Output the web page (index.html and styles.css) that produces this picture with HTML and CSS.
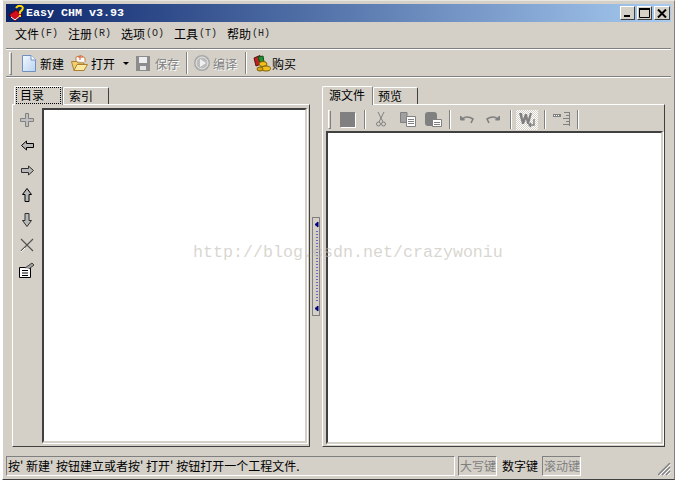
FILE: index.html
```html
<!DOCTYPE html>
<html lang="zh-CN">
<head>
    <meta charset="UTF-8">
    <meta name="viewport" content="width=device-width, initial-scale=1.0">
    <title>Easy CHM v3.93</title>
    <link rel="stylesheet" href="styles.css">
</head>
<body>
    <div class="window">
        <div class="titlebar">
            <svg class="app-icon" width="16" height="17" viewBox="0 0 16 17">
                <path d="M0 10 L7 5 L13 10 L6 16 Z" fill="#d01020" stroke="#600000"/>
                <path d="M2 12 L6 15 L12 10" fill="none" stroke="#fff"/>
                <path d="M7 3 Q9 0 12 1 Q15 2 13 5 L11 7 L11 9" fill="none" stroke="#ffd800" stroke-width="2"/>
                <rect x="10" y="10" width="2" height="2" fill="#ffd800"/>
            </svg>
            <span class="title-text">Easy CHM v3.93</span>
            <div class="caption-btns">
                <div class="caption-btn caption-min"><svg width="8" height="8"><rect x="0" y="6" width="6" height="2" fill="#000"/></svg></div>
                <div class="caption-btn caption-max"><svg width="11" height="10"><path d="M0.5 1.5 H10.5 V9.5 H0.5 Z" fill="none" stroke="#000"/><rect x="0" y="0" width="11" height="2" fill="#000"/></svg></div>
                <div class="caption-btn caption-close"><svg width="10" height="9"><path d="M1 0.5 L9 8.5 M9 0.5 L1 8.5" stroke="#000" stroke-width="2"/></svg></div>
            </div>
        </div>

        <div class="menubar">
            <span class="menu-item">文件<span class="key">(F)</span></span>
            <span class="menu-item">注册<span class="key">(R)</span></span>
            <span class="menu-item">选项<span class="key">(O)</span></span>
            <span class="menu-item">工具<span class="key">(T)</span></span>
            <span class="menu-item">帮助<span class="key">(H)</span></span>
        </div>

        <div class="toolbar">
            <div class="grip"></div>
            <div class="tool tool-new">
                <svg width="14" height="17" viewBox="0 0 14 17">
                    <defs><linearGradient id="pageFill" x1="0" y1="0" x2="1" y2="1"><stop offset="0" stop-color="#f4f8fe"/><stop offset="1" stop-color="#b8d4f0"/></linearGradient></defs>
                    <path d="M0.5 0.5 H9 L13.5 5 V16.5 H0.5 Z" fill="url(#pageFill)" stroke="#7090c0"/>
                    <path d="M9 0.5 V5 H13.5" fill="#fff" stroke="#7090c0"/>
                </svg>
                <span>新建</span>
            </div>
            <div class="tool tool-open">
                <svg width="17" height="17" viewBox="0 0 17 17">
                    <path d="M5 6 V2 L10 0.5 L14 3 V7" fill="#fff" stroke="#c08040"/>
                    <path d="M7 2 L12 2 M9 1 L9 5" stroke="#e05030"/>
                    <path d="M0.5 6.5 H6 L7 8 H13 V15.5 H3 Z" fill="#f0d070" stroke="#b08030"/>
                    <path d="M3 15.5 L6 9.5 H16.5 L13 15.5 Z" fill="#fbe9a0" stroke="#b08030"/>
                </svg>
                <span>打开</span>
            </div>
            <svg class="drop-arrow" width="6" height="3"><path d="M0 0 H6 L3 3 Z" fill="#000"/></svg>
            <div class="tool tool-save off">
                <svg width="14" height="15" viewBox="0 0 14 15">
                    <path d="M0 0 H14 V15 H0 Z" fill="#8c8c8c"/>
                    <rect x="3" y="1" width="8" height="6" fill="#eee"/>
                    <rect x="4" y="10" width="6" height="4" fill="#e4e4e4"/>
                </svg>
                <span>保存</span>
            </div>
            <div class="sep sep-a"></div>
            <div class="tool tool-build off">
                <svg width="16" height="16" viewBox="0 0 16 16">
                    <circle cx="8" cy="8" r="8" fill="#a8a8a8"/>
                    <circle cx="8" cy="8" r="6" fill="#bcbcbc" stroke="#e8e8e8"/>
                    <path d="M6 4 L12 8 L6 12 Z" fill="#f0f0f0"/>
                </svg>
                <span>编译</span>
            </div>
            <div class="sep sep-b"></div>
            <div class="tool tool-buy">
                <svg width="18" height="17" viewBox="0 0 18 17">
                    <path d="M1 3 L7 0.5 L8 9 L3 11 Z" fill="#c02020" stroke="#601010"/>
                    <path d="M5 2 L10 1 L11 7 L7 8 Z" fill="#209030" stroke="#105018"/>
                    <ellipse cx="10" cy="9" rx="4" ry="2.5" fill="#f0c020" stroke="#806000"/>
                    <ellipse cx="13" cy="13.5" rx="4.5" ry="2.5" fill="#f0c020" stroke="#806000"/>
                    <ellipse cx="7" cy="14" rx="3" ry="2" fill="#d8a818" stroke="#806000"/>
                </svg>
                <span>购买</span>
            </div>
        </div>

        <div class="main">
            <div class="pane pane-left">
                <div class="tabs">
                    <div class="tab tab-on tab-index"><span class="focus">目录</span></div>
                    <div class="tab tab-search">索引</div>
                </div>
                <div class="panel panel-left">
                    <div class="sidebar">
                        <svg width="16" height="16" viewBox="0 0 16 16"><path d="M6.5 1.5 H9.5 V6.5 H14.5 V9.5 H9.5 V14.5 H6.5 V9.5 H1.5 V6.5 H6.5 Z" fill="#c0c0c0" stroke="#808080"/></svg>
                        <svg width="16" height="16" viewBox="0 0 16 16"><path d="M2.5 8.5 L7.5 4 V6.5 H14.5 V10.5 H7.5 V13 Z" fill="#b8b8b8" stroke="#000"/></svg>
                        <svg width="16" height="16" viewBox="0 0 16 16"><path d="M14.5 8.5 L9.5 4 V6.5 H2.5 V10.5 H9.5 V13 Z" fill="#b8b8b8" stroke="#303030"/></svg>
                        <svg width="16" height="16" viewBox="0 0 16 16"><path d="M8 1.5 L12.5 7.5 H10 V14.5 H6 V7.5 H3.5 Z" fill="#b8b8b8" stroke="#000"/></svg>
                        <svg width="16" height="16" viewBox="0 0 16 16"><path d="M8 14.5 L12.5 8.5 H10 V1.5 H6 V8.5 H3.5 Z" fill="#b8b8b8" stroke="#303030"/></svg>
                        <svg width="16" height="16" viewBox="0 0 16 16"><path d="M2 2 L14 14 M14 2 L2 14" stroke="#505050" stroke-width="1.1"/><path d="M2 15 L6 11" stroke="#fff"/></svg>
                        <svg width="16" height="16" viewBox="0 0 16 16"><path d="M0.5 5.5 H11.5 V15.5 H0.5 Z" fill="#fff" stroke="#000"/><path d="M3 8.5 H9 M3 11 H9 M3 13.5 H9" stroke="#000"/><path d="M6 6 L13 1 L15 3 L10 7" fill="#a0a0a0" stroke="#404040"/></svg>
                    </div>
                    <div class="sunken list"></div>
                </div>
            </div>

            <div class="splitter">
                <div class="split-grip">
                    <svg width="6" height="91" viewBox="0 0 6 91">
                        <path d="M4 1 V6 L1 3.5 Z" fill="#000080" stroke="#000080"/>
                        <path d="M3 10 V80" stroke="#0000a0" stroke-dasharray="1 2"/>
                        <path d="M4 85 V90 L1 87.5 Z" fill="#000080" stroke="#000080"/>
                    </svg>
                </div>
            </div>

            <div class="pane pane-right">
                <div class="tabs">
                    <div class="tab tab-on tab-source">源文件</div>
                    <div class="tab tab-preview">预览</div>
                </div>
                <div class="panel panel-right">
                    <div class="edit-tools">
                        <div class="grip grip-small"></div>
                        <div class="stop-icon"></div>
                        <div class="sep sep-small"></div>
                        <svg class="ed-cut" width="10" height="15" viewBox="0 0 10 15"><path d="M2 0 L7 10 M8 0 L3 10" stroke="#808080"/><circle cx="2.5" cy="12" r="2" fill="none" stroke="#808080"/><circle cx="7.5" cy="12" r="2" fill="none" stroke="#808080"/></svg>
                        <svg class="ed-copy" width="16" height="15" viewBox="0 0 16 15"><path d="M0.5 0.5 H7 V10.5 H0.5 Z" fill="#a0a0a0" stroke="#808080"/><path d="M6.5 4.5 H15.5 V14.5 H6.5 Z" fill="#fff" stroke="#808080"/><path d="M8 7.5 H14 M8 9.5 H14 M8 11.5 H14" stroke="#808080"/></svg>
                        <svg class="ed-paste" width="17" height="15" viewBox="0 0 17 15"><rect x="0" y="0" width="12" height="14" rx="3" fill="#808080"/><path d="M7.5 7.5 H16.5 V14.5 H7.5 Z" fill="#fff" stroke="#808080"/><path d="M9 10.5 H15 M9 12.5 H15" stroke="#808080"/></svg>
                        <div class="sep sep-small sep-edit"></div>
                        <svg class="ed-undo" width="14" height="9" viewBox="0 0 14 9"><path d="M0.5 1 V5 H4.5 Z" fill="#808080" stroke="#808080"/><path d="M2 4 Q7 0 13 4 L11 8" fill="none" stroke="#808080" stroke-width="1.6"/></svg>
                        <svg class="ed-redo" width="14" height="9" viewBox="0 0 14 9"><path d="M13.5 1 V5 H9.5 Z" fill="#808080" stroke="#808080"/><path d="M12 4 Q7 0 1 4 L3 8" fill="none" stroke="#808080" stroke-width="1.6"/></svg>
                        <div class="sep sep-small sep-undo"></div>
                        <div class="wrap-btn">
                            <svg width="19" height="18" viewBox="0 0 19 18"><path d="M1 2 H4 L5 8 L7 3 H9 L10 8 L12 2 H14 L11 13 H9 L8 8 L6 13 H4 Z" fill="#808080"/><path d="M16 8 V14 H11 M13 12 L11 14 L13 16" fill="none" stroke="#808080" stroke-width="1.4"/></svg>
                        </div>
                        <div class="sep sep-small sep-wrap"></div>
                        <svg class="ed-ruler" width="17" height="15" viewBox="0 0 17 15"><rect x="0" y="2" width="8" height="3" fill="#808080"/><path d="M1 3.5 H7" stroke="#fff" stroke-dasharray="1 1"/><path d="M11 0.5 H17 M13 3.5 H17 M10 6.5 H17 M13 9.5 H17 M10 12.5 H17" stroke="#808080"/><path d="M16.5 0 V14" stroke="#808080"/></svg>
                        <div class="sep sep-small sep-ruler"></div>
                    </div>
                    <div class="sunken editor"></div>
                </div>
            </div>
        </div>

        <div class="statusbar">
            <div class="status status-msg">按' 新建' 按钮建立或者按' 打开' 按钮打开一个工程文件.</div>
            <div class="status status-key key-off">大写键</div>
            <div class="status-plain">数字键</div>
            <div class="status status-key key-off">滚动键</div>
            <svg class="resize" width="13" height="13" viewBox="0 0 13 13">
                <path d="M0 12 L12 0 M4 12 L12 4 M8 12 L12 8" stroke="#808080" stroke-width="1.4"/>
                <path d="M1.5 12.5 L12.5 1.5 M5.5 12.5 L12.5 5.5 M9.5 12.5 L12.5 9.5" stroke="#fff"/>
            </svg>
        </div>

        <div class="watermark">http://blog.csdn.net/crazywoniu</div>
    </div>
</body>
</html>
```

FILE: styles.css
```css
* {
    box-sizing: border-box;
}
body {
    margin: 0;
    background: #fff;
    font-family: "Noto Sans CJK SC", "Liberation Sans", sans-serif;
    font-size: 12px;
    color: #000;
    overflow: hidden;
}
svg {
    display: block;
    flex: none;
}

/* window frame */
.window {
    position: relative;
    width: 673px;
    height: 480px;
    margin-left: 2px;
    padding: 3px;
    background: #d4d0c8;
    border: 1px solid #d4d0c8;
    border-top-color: #e8e6e0;
    border-left-color: #fff;
    border-right-color: #808080;
    border-bottom-color: #404040;
}
.titlebar {
    display: flex;
    align-items: center;
    height: 18px;
    padding: 0 1px 0 3px;
    background: linear-gradient(to right, #0a246a, #a6caf0);
}
.title-text {
    margin-left: 1px;
    font-family: "Liberation Mono", monospace;
    font-size: 11.67px;
    font-weight: bold;
    color: #fff;
}
.caption-btns {
    display: flex;
    margin-left: auto;
    gap: 2px;
}
.caption-btn {
    display: flex;
    align-items: center;
    justify-content: center;
    width: 15px;
    height: 14px;
    background: #d4d0c8;
    border: 1px solid;
    border-color: #fff #404040 #404040 #fff;
}
.caption-close {
    width: 16px;
}

/* menu */
.menubar {
    display: flex;
    align-items: center;
    height: 27px;
    padding: 0 0 2px 9px;
    gap: 13px;
    border-bottom: 1px solid #808080;
}
.menu-item {
    display: flex;
    align-items: center;
    width: 40px;
    white-space: nowrap;
    line-height: 16px;
}
.key {
    margin-left: 1px;
    font-family: "Liberation Mono", monospace;
    font-size: 10px;
    color: #222;
}

/* main toolbar */
.toolbar {
    display: flex;
    align-items: center;
    height: 28px;
    padding-left: 3px;
    border-top: 1px solid #fff;
    border-bottom: 1px solid #808080;
}
.grip {
    width: 3px;
    height: 23px;
    border: 1px solid;
    border-color: #fff #808080 #808080 #fff;
}
.tool {
    display: flex;
    align-items: center;
    gap: 4px;
}
.tool.off {
    color: #808080;
    text-shadow: 1px 1px 0 #fff;
}
.tool-new { margin-left: 10px; }
.tool-open { margin-left: 7px; gap: 3px; }
.drop-arrow { margin-left: 8px; }
.tool-save { margin-left: 7px; gap: 5px; }
.tool-build { margin-left: 6px; gap: 3px; }
.tool-buy { margin-left: 6px; gap: 1px; }
.sep {
    width: 2px;
    height: 22px;
    border-left: 1px solid #808080;
    border-right: 1px solid #fff;
}
.sep-a { margin-left: 7px; }
.sep-b { margin-left: 8px; }

/* panes */
.main {
    display: flex;
    height: 378px;
    padding: 7px 0 8px 6px;
    border-top: 1px solid #fff;
}
.pane {
    display: flex;
    flex-direction: column;
}
.pane-left { width: 298px; }
.pane-right { width: 343px; }
.tabs {
    display: flex;
    align-items: flex-end;
    height: 19px;
    padding-left: 2px;
}
.pane-right .tabs {
    padding-left: 0;
}
.tab {
    position: relative;
    height: 17px;
    padding: 0 0 0 5px;
    line-height: 15px;
    background: #d4d0c8;
    border: 1px solid;
    border-color: #fff #404040 transparent #fff;
    border-bottom: 0;
    border-radius: 2px 2px 0 0;
}
.tab-on {
    height: 19px;
    margin-bottom: -1px;
    z-index: 1;
    border-right-color: #808080;
}
.tab-index { width: 49px; padding: 1px 2px; }
.tab-search { width: 46px; }
.tab-source { width: 51px; padding-left: 6px; }
.tab-preview { width: 45px; padding-left: 4px; }
.focus {
    display: block;
    height: 15px;
    padding-left: 3px;
    line-height: 14px;
    outline: 1px dotted #000;
}
.panel {
    flex: 1;
    display: flex;
    background: #d4d0c8;
    border: 1px solid;
    border-color: #fff #404040 #404040 #fff;
}
.panel-left {
    padding: 3px 2px 3px 0;
}
.panel-right {
    flex-direction: column;
    padding: 0 1px 2px 3px;
}
.sidebar {
    display: flex;
    flex-direction: column;
    align-items: center;
    gap: 9px;
    width: 29px;
    padding: 4px 1px 0 0;
}
.sunken {
    flex: 1;
    background: #fff;
    border: 2px solid;
    border-color: #404040 #d4d0c8 #d4d0c8 #404040;
    box-shadow: 1px 1px 0 #fff;
}

/* splitter */
.splitter {
    display: flex;
    align-items: center;
    justify-content: center;
    width: 12px;
}
.split-grip {
    width: 8px;
    height: 99px;
    padding: 3px 0 0 1px;
    background: #d4d0c8;
    border: 1px solid #808080;
}

/* editor toolbar */
.edit-tools {
    display: flex;
    align-items: center;
    height: 26px;
    padding: 3px 0 0 2px;
}
.grip-small {
    height: 19px;
}
.stop-icon {
    width: 15px;
    height: 15px;
    margin-left: 9px;
    background: #808080;
    box-shadow: 1px 1px 0 #fff;
}
.sep-small {
    height: 19px;
    margin-left: 9px;
}
.ed-cut { margin-left: 10px; }
.ed-copy { margin-left: 14px; }
.ed-paste { margin-left: 9px; }
.sep-edit { margin-left: 7px; }
.ed-undo { margin-left: 9px; }
.ed-redo { margin-left: 12px; }
.sep-undo { margin-left: 10px; }
.wrap-btn {
    display: flex;
    align-items: center;
    justify-content: center;
    width: 22px;
    height: 20px;
    margin-left: 4px;
    background-color: #ebe9e4;
    background-image: repeating-conic-gradient(#fff 0 25%, #d4d0c8 0 50%);
    background-size: 2px 2px;
}
.sep-wrap { margin-left: 6px; }
.ed-ruler { margin-left: 7px; }
.sep-ruler { margin-left: 7px; }
.editor {
    flex: 1;
}

/* status bar */
.statusbar {
    display: flex;
    align-items: stretch;
    height: 20px;
    margin-top: 1px;
    gap: 3px;
}
.status {
    padding-left: 1px;
    line-height: 18px;
    white-space: nowrap;
    border: 1px solid;
    border-color: #808080 #fff #fff #808080;
}
.status-msg {
    width: 449px;
}
.status-key {
    width: 39px;
}
.status-plain {
    width: 39px;
    padding-left: 2px;
    line-height: 20px;
}
.key-off {
    color: #808080;
}
.resize {
    align-self: flex-end;
    margin-left: auto;
}

/* blog watermark stamped over the shot */
.watermark {
    position: absolute;
    top: 243px;
    left: 190px;
    font-family: "Liberation Mono", monospace;
    font-size: 16.67px;
    line-height: 18px;
    color: rgba(190, 186, 176, 0.6);
    white-space: nowrap;
    pointer-events: none;
    z-index: 2;
}
```
